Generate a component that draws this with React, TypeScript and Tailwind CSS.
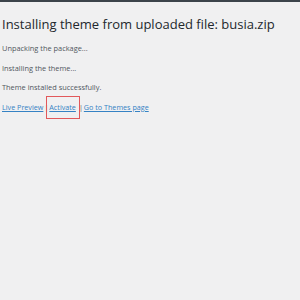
import React from "react";

export default function App() {
  return (
    <div className="w-[300px] h-[300px] bg-[#f0f0f1] border-t-2 border-[#3c434a] overflow-hidden" style={{ fontFamily: '"Open Sans", "Noto Sans", sans-serif' }}>
      <div className="pl-[2px] pt-[12px]">
        <h1 className="text-[13px] leading-[20px] text-[#23282d] whitespace-nowrap">Installing theme from uploaded file: busia.zip</h1>
        <div className="mt-[9px] text-[7.4px] leading-[10px] text-[#50575e] flex flex-col gap-[9.5px]">
          <p>Unpacking the package...</p>
          <p>Installing the theme...</p>
          <p>Theme installed successfully.</p>
          <p className="flex items-center whitespace-nowrap text-[7.2px]">
            <span className="text-[#3582c4] underline">Live Preview</span>
            <span className="mx-[1px] text-[#50575e]">|</span>
            <span className="relative text-[#3582c4] underline">
              Activate
              <span className="absolute left-[-3px] right-[-4px] top-[-6px] bottom-[-7px] border border-[#e2585b]"></span>
            </span>
            <span className="ml-[3px] mr-[1px] text-[#50575e]">|</span>
            <span className="text-[#3582c4] underline">Go to Themes page</span>
          </p>
        </div>
      </div>
    </div>
  );
}
